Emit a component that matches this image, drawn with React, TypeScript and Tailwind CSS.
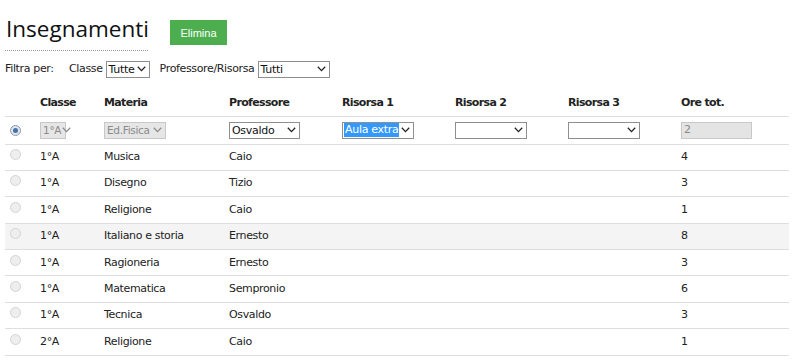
import React from 'react'

type Row = { classe: string; materia: string; prof: string; ore: number; hover?: boolean }

const rows: Row[] = [
  { classe: '1°A', materia: 'Musica', prof: 'Caio', ore: 4 },
  { classe: '1°A', materia: 'Disegno', prof: 'Tizio', ore: 3 },
  { classe: '1°A', materia: 'Religione', prof: 'Caio', ore: 1 },
  { classe: '1°A', materia: 'Italiano e storia', prof: 'Ernesto', ore: 8, hover: true },
  { classe: '1°A', materia: 'Ragioneria', prof: 'Ernesto', ore: 3 },
  { classe: '1°A', materia: 'Matematica', prof: 'Sempronio', ore: 6 },
  { classe: '1°A', materia: 'Tecnica', prof: 'Osvaldo', ore: 3 },
  { classe: '2°A', materia: 'Religione', prof: 'Caio', ore: 1 },
]

function Chevron({ muted }: { muted?: boolean }) {
  return (
    <svg width="9" height="6" viewBox="0 0 9 6" className="shrink-0">
      <path d="M0.8 0.8 L4.5 4.6 L8.2 0.8" fill="none" stroke={muted ? '#8a8a8a' : '#222'} strokeWidth="1.3" />
    </svg>
  )
}

function FakeSelect({
  value,
  width,
  disabled,
  focused,
}: {
  value: string
  width: string
  disabled?: boolean
  focused?: boolean
}) {
  return (
    <div
      className={[
        'flex h-[17px] items-center justify-between border pr-[3px] pl-[1px] leading-none tracking-[-0.3px] whitespace-nowrap',
        disabled ? 'text-[10.5px]' : 'text-[11px]',
        width,
        disabled ? 'border-[#c8c8c8] bg-[#e6e6e6] text-[#8a8a8a]' : 'border-[#8f8f8f] bg-white text-[#111]',
      ].join(' ')}
    >
      <span className={focused ? 'bg-[#3399ff] px-[1px] leading-[14px] text-white' : 'px-[1px]'}>{value}</span>
      <Chevron muted={disabled} />
    </div>
  )
}

function Radio({ checked }: { checked?: boolean }) {
  return (
    <span
      className={[
        'inline-flex h-[11px] w-[11px] items-center justify-center rounded-full border',
        checked ? 'border-[#8c9bb0] bg-[#dfe6ee]' : 'border-[#d4d4d4] bg-[#eeeeee]',
      ].join(' ')}
    >
      {checked && <span className="h-[5px] w-[5px] rounded-full bg-[#4a6fa5]" />}
    </span>
  )
}

export default function App() {
  return (
    <div className="min-h-[363px] w-[794px] bg-white font-['DejaVu_Sans',Verdana,sans-serif] text-[11px] tracking-[-0.35px] text-[#222]">
      <div className="flex items-start pt-[12px] pl-[5px]">
        <h1 className="w-[143px] border-b border-dotted border-[#9a9a9a] pb-[4px] pl-[1px] font-['Open_Sans',sans-serif] text-[22.5px] leading-[34px] font-normal tracking-normal text-[#111]">
          Insegnamenti
        </h1>
        <button
          type="button"
          className="mt-[8px] ml-[22px] h-[25px] w-[57px] bg-[#4cae4f] pt-[1px] font-['Liberation_Sans',Arial,sans-serif] text-[11px] tracking-normal text-white"
        >
          Elimina
        </button>
      </div>

      <div className="mt-[10px] flex h-[16px] items-center pl-[5px]">
        <span className="w-[64px]">Filtra per:</span>
        <span className="mr-[3px]">Classe</span>
        <FakeSelect value="Tutte" width="w-[44px]" />
        <span className="mr-[3px] ml-[10px]">Professore/Risorsa</span>
        <FakeSelect value="Tutti" width="w-[72px]" />
      </div>

      <table className="mt-[13px] ml-[5px] w-[784px] table-fixed border-collapse">
        <colgroup>
          <col className="w-[35px]" />
          <col className="w-[64px]" />
          <col className="w-[125px]" />
          <col className="w-[113px]" />
          <col className="w-[113px]" />
          <col className="w-[113px]" />
          <col className="w-[113px]" />
          <col className="w-[108px]" />
        </colgroup>
        <thead>
          <tr className="h-[26px] border-b border-[#dedede] text-left tracking-[-0.65px]">
            <th />
            <th className="font-bold">Classe</th>
            <th className="font-bold">Materia</th>
            <th className="font-bold">Professore</th>
            <th className="font-bold">Risorsa 1</th>
            <th className="font-bold">Risorsa 2</th>
            <th className="font-bold">Risorsa 3</th>
            <th className="font-bold">Ore tot.</th>
          </tr>
        </thead>
        <tbody>
          <tr className="h-[28px] border-b border-[#dedede]">
            <td className="pl-[5px] align-middle">
              <Radio checked />
            </td>
            <td>
              <FakeSelect value="1°A" width="w-[26px]" disabled />
            </td>
            <td>
              <FakeSelect value="Ed.Fisica" width="w-[62px]" disabled />
            </td>
            <td>
              <FakeSelect value="Osvaldo" width="w-[71px]" />
            </td>
            <td>
              <FakeSelect value="Aula extra" width="w-[72px]" focused />
            </td>
            <td>
              <FakeSelect value="" width="w-[72px]" />
            </td>
            <td>
              <FakeSelect value="" width="w-[72px]" />
            </td>
            <td>
              <div className="flex h-[17px] w-[71px] items-center border border-[#c8c8c8] bg-[#e4e4e4] pl-[2px] text-[11px] text-[#8a8a8a]">
                2
              </div>
            </td>
          </tr>
          {rows.map((r, i) => (
            <tr key={i} className={['h-[26.4px] border-b border-[#dedede]', r.hover ? 'bg-[#f4f4f4]' : ''].join(' ')}>
              <td className="pl-[5px] align-middle">
                <Radio />
              </td>
              <td>{r.classe}</td>
              <td>{r.materia}</td>
              <td>{r.prof}</td>
              <td />
              <td />
              <td />
              <td>{r.ore}</td>
            </tr>
          ))}
        </tbody>
      </table>
    </div>
  )
}
